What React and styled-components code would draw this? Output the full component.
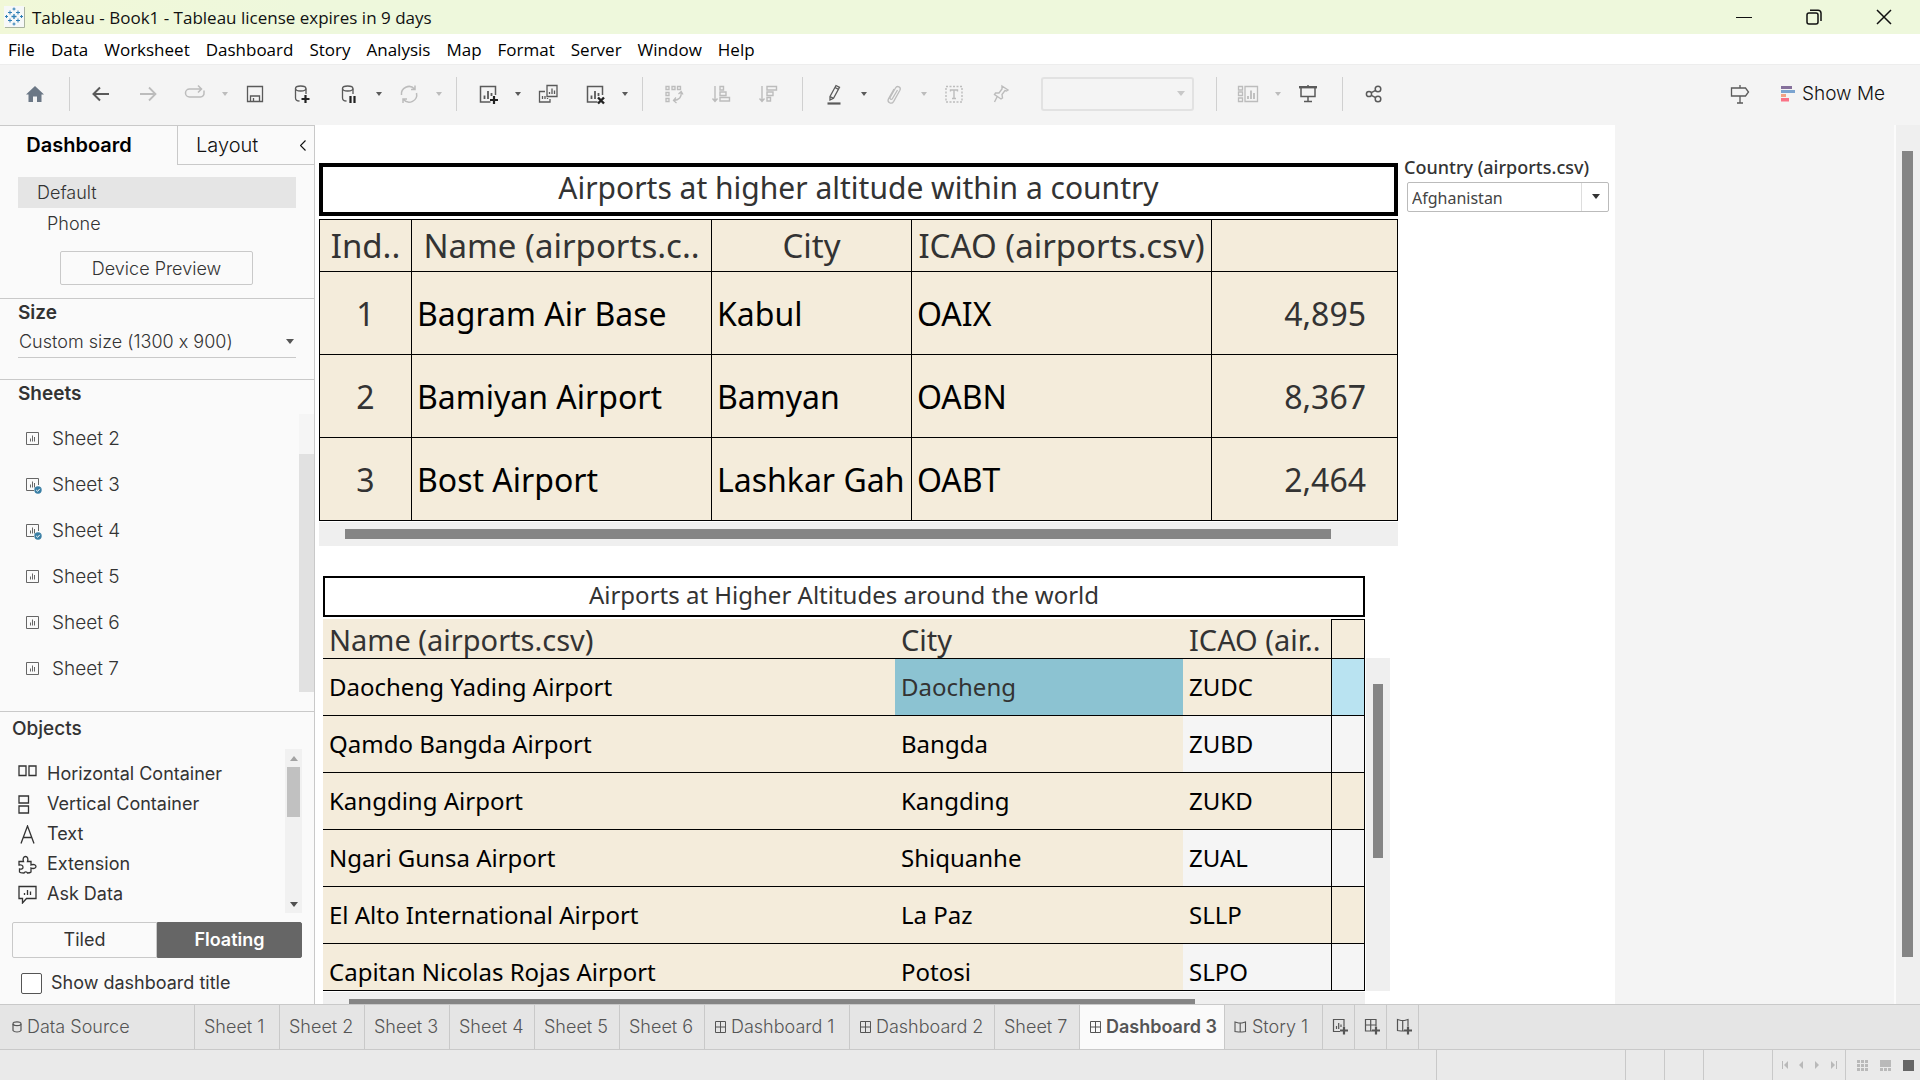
import React from 'react';
import styled, { createGlobalStyle, css } from 'styled-components';

const SYS = '"Open Sans", "Noto Sans", sans-serif';
const UI = 'Inter, "Liberation Sans", sans-serif';
const VIZ = '"Noto Sans", "Open Sans", sans-serif';
const LINE = '#c9c9c9';
const CREAM = '#f4ecdb';

const Global = createGlobalStyle`
  *, *::before, *::after { box-sizing: border-box; }
  html, body { margin: 0; height: 100%; }
  body { font-family: ${UI}; font-feature-settings: "calt" 0; color: #333; overflow: hidden; }
  button, select, input { font: inherit; font-feature-settings: inherit; color: inherit; margin: 0; }
  button { background: none; border: 0; padding: 0; }
`;

const Page = styled.div`
  display: flex;
  flex-direction: column;
  height: 100vh;
  background: #fff;
`;

/* ---------- window chrome ---------- */

const TitleBar = styled.header`
  display: flex;
  align-items: center;
  height: 34px;
  flex: none;
  padding: 0 6px 0 4px;
  background: linear-gradient(90deg, #f1f8d8, #eef8dc 300px);
  font: 17px/24px ${SYS};
  color: #111;
`;

const AppTitle = styled.h1`
  margin: 0 auto 0 7px;
  padding-top: 2px;
  font: inherit;
`;

const WindowButton = styled.button`
  display: grid;
  place-items: center;
  width: 70px;
  height: 34px;
  &:last-child { width: 60px; margin-left: 5px; }
`;

const MenuBar = styled.nav`
  display: flex;
  align-items: center;
  gap: 16px;
  height: 30px;
  flex: none;
  padding: 2px 0 0 8px;
  font: 17px/24px ${SYS};
  color: #000;
`;

const ToolBar = styled.div`
  display: flex;
  align-items: center;
  gap: 1px;
  height: 61px;
  flex: none;
  padding: 0 35px 2px 12px;
  background: #f4f4f4;
  border-top: 1px solid #ededed;
`;

const Tool = styled.button`
  display: grid;
  place-items: center;
  width: 46px;
  height: 40px;
  color: ${p => (p.$off ? '#bcbcbc' : '#5a5a5a')};
`;

const CaretTool = styled(Tool)`
  width: 12px;
`;

const Divider = styled.span`
  width: 1px;
  height: 34px;
  margin: 0 7px 0 10px;
  background: #d0d0d0;
`;

const FitBox = styled.div`
  position: relative;
  margin: 0 11px 0 16px;
  color: #c8c8c8;
  select {
    display: block;
    appearance: none;
    width: 153px;
    height: 34px;
    background: none;
    border: 2px solid #dadada;
    border-radius: 3px;
  }
  svg { position: absolute; right: 9px; top: 14px; pointer-events: none; }
`;

const ShowMe = styled.button`
  display: flex;
  align-items: center;
  gap: 7px;
  margin-left: 17px;
  font: 19px/26px ${UI};
  font-weight: 300;
  color: #111;
`;

const Spacer = styled.span`
  flex: 1;
`;

/* ---------- side bar ---------- */

const Workspace = styled.main`
  display: flex;
  flex: 1;
  min-height: 0;
`;

const SideBar = styled.aside`
  display: flex;
  flex-direction: column;
  width: 315px;
  flex: none;
  background: #fafafa;
  border: solid ${LINE};
  border-width: 1px 1px 0 0;
  font-size: 18px;
  line-height: 24px;
  font-weight: 300;
`;

const PaneTabs = styled.div`
  display: flex;
  height: 39px;
  flex: none;
`;

const PaneTab = styled.button`
  font-size: 20px;
  color: #111;
  ${p => p.$active
    ? css`width: 177px; padding: 0 19px 2px 0; font-weight: 600; color: #000;`
    : css`flex: 1; padding: 0 8px 0 18px; display: flex; align-items: center; justify-content: space-between;
        border: solid ${LINE}; border-width: 0 0 1px 1px;`}
`;

const Section = styled.section`
  flex: none;
  padding: ${p => p.$pad};
  border-bottom: 1px solid ${LINE};
`;

const Heading = styled.h2`
  margin: 0;
  font-size: 19px;
  line-height: 24px;
  font-weight: ${p => p.$weight || 600};
`;

const Device = styled.button`
  display: block;
  width: 278px;
  height: 31px;
  text-align: left;
  padding-left: ${p => (p.$active ? 19 : 29)}px;
  background: ${p => (p.$active ? '#e5e5e5' : 'none')};
`;

const Preview = styled.button`
  display: block;
  width: 193px;
  height: 34px;
  margin: 12px 0 0 42px;
  padding-top: 1px;
  border: 1px solid ${LINE};
  border-radius: 2px;
`;

const SizeBox = styled.div`
  position: relative;
  select {
    display: block;
    appearance: none;
    width: 278px;
    height: 33px;
    padding: 2px 0 0 1px;
    background: none;
    border: 0;
    border-bottom: 1px solid ${LINE};
    font-weight: 300;
  }
  svg { position: absolute; right: 2px; top: 14px; pointer-events: none; }
`;

const SheetsSection = styled.section`
  display: flex;
  flex-direction: column;
  flex: 1;
  min-height: 0;
  padding: 2px 0 19px 18px;
  border-bottom: 1px solid ${LINE};
`;

const ScrollArea = styled.div`
  display: flex;
  flex: 1;
  min-height: 0;
  margin-top: 8px;
  justify-content: space-between;
`;

const List = styled.ul`
  margin: 0;
  padding: ${p => p.$pad || 0};
  list-style: none;
  flex: 1;
`;

const SheetItem = styled.li`
  display: flex;
  align-items: center;
  gap: 10px;
  height: 46px;
  padding: 3px 0 0 8px;
  font-size: 19px;
`;

const SheetTrack = styled.div`
  width: 15px;
  padding-top: 40px;
  background: #f5f5f5;
  div { height: 100%; background: #e1e1e1; }
`;

const ObjectsSection = styled.section`
  flex: none;
  padding: 5px 12px 9px;
`;

const ObjectItem = styled.li`
  display: flex;
  align-items: center;
  gap: 10px;
  height: 30px;
  font-weight: 400;
  font-size: 18px;
`;

const ObjectTrack = styled.div`
  display: flex;
  flex-direction: column;
  align-items: center;
  justify-content: space-between;
  width: 17px;
  height: 164px;
  padding: 7px 0 6px;
  background: #f1f1f1;
  div { width: 13px; height: 50px; margin: 6px 0 auto; background: #c1c1c1; }
`;

const Segments = styled.div`
  display: flex;
  margin-top: 9px;
  height: 36px;
`;

const Segment = styled.button`
  flex: 1;
  font-size: 18px;
  font-weight: ${p => (p.$active ? 600 : 400)};
  color: ${p => (p.$active ? '#fff' : '#333')};
  background: ${p => (p.$active ? '#666' : '#fafafa')};
  border: 1px solid ${p => (p.$active ? '#666' : LINE)};
  border-radius: ${p => (p.$active ? '0 2px 2px 0' : '2px 0 0 2px')};
`;

const CheckLabel = styled.label`
  display: flex;
  align-items: center;
  gap: 9px;
  margin-top: 13px;
  padding-left: 9px;
  font-size: 18px;
  font-weight: 400;
  input {
    appearance: none;
    width: 21px;
    height: 21px;
    background: #fff;
    border: 1px solid #555;
    border-radius: 2px;
  }
`;

/* ---------- dashboard ---------- */

const Stage = styled.div`
  flex: 1;
  min-width: 0;
  overflow: hidden;
  background: #f4f4f4;
`;

const Canvas = styled.div`
  display: flex;
  align-items: flex-start;
  gap: 6px;
  width: 1300px;
  min-height: 900px;
  padding-left: 4px;
  background: #fff;
  font-family: ${VIZ};
`;

const Views = styled.div`
  display: flex;
  flex-direction: column;
  gap: 30px;
  padding-top: 38px;
`;

const View = styled.section`
  margin-left: ${p => p.$indent || 0}px;
`;

const ViewTitle = styled.h2`
  display: flex;
  align-items: center;
  justify-content: center;
  margin: 0;
  padding-bottom: 3px;
  height: ${p => (p.$large ? 53 : 41)}px;
  width: ${p => (p.$large ? 'auto' : '1042px')};
  border: ${p => (p.$large ? 4 : 2)}px solid #000;
  font-size: ${p => (p.$large ? 30 : 24)}px;
  line-height: 36px;
  font-weight: 400;
`;

const Grid = styled.table`
  table-layout: fixed;
  width: 1079px;
  margin-top: 3px;
  border-spacing: 0;
  border: solid #000;
  border-width: 1px 0 0 1px;
  background: ${CREAM};
  font-size: 32px;
  line-height: 40px;
  color: #000;
  th, td {
    padding: 1px 5px 0;
    border: solid #000;
    border-width: 0 1px 1px 0;
    text-align: left;
    white-space: nowrap;
    height: 83px;
  }
  th { height: 52px; font-weight: 400; font-size: 33px; text-align: center; color: #333; }
  td:first-child { text-align: center; color: #333; }
  td:last-child { text-align: right; padding-right: 31px; color: #333; }
`;

const HTrack = styled.div`
  height: 24px;
  margin-top: 1px;
  padding: 7px 26px;
  background: #efefef;
  width: ${p => p.$width}px;
  div { height: 10px; background: #858585; width: ${p => p.$thumb}px; }
`;

const WorldBody = styled.div`
  display: flex;
  align-items: flex-end;
  gap: 1px;
  margin-top: 2px;
`;

const Clip = styled.div`
  height: 372px;
  overflow: hidden;
  border-bottom: 1px solid #000;
`;

const WorldGrid = styled.table`
  table-layout: fixed;
  width: 1042px;
  border-spacing: 0;
  background: ${CREAM};
  font-size: 24px;
  line-height: 32px;
  color: #000;
  th, td {
    height: 57px;
    padding: 0 6px;
    border-bottom: 1px solid #000;
    text-align: left;
    white-space: nowrap;
  }
  th { height: 40px; padding-top: 2px; font-weight: 400; font-size: 29px; color: #333; }
  th:last-child { border-top: 1px solid #000; }
  th:last-child, td:last-child { border-left: 1px solid #000; border-right: 1px solid #000; }
  tr:nth-child(even) td:nth-child(n + 3) { background: #f5f5f5; }
`;

const WorldCell = styled.td`
  && { background: ${p => p.$bg}; color: #333; }
`;

const VTrack = styled.div`
  width: 24px;
  height: 333px;
  padding: 26px 7px;
  background: #efefef;
  div { height: 174px; background: #858585; }
`;

const Filter = styled.div`
  padding-top: 30px;
  label { display: block; font-size: 18px; line-height: 24px; font-weight: 500; }
`;

const FilterBox = styled.div`
  position: relative;
  margin: 3px 0 0 3px;
  select {
    display: block;
    appearance: none;
    width: 202px;
    height: 30px;
    padding: 2px 30px 0 4px;
    background: #fff linear-gradient(#ddd, #ddd) no-repeat right 26px top 0 / 1px 100%;
    border: 1px solid #bbb;
    border-radius: 2px;
    font-size: 16px;
    color: #444;
  }
  svg { position: absolute; right: 9px; top: 12px; pointer-events: none; }
`;

const PageTrack = styled.div`
  width: 26px;
  flex: none;
  padding: 26px 7px 47px 6px;
  background: #efefef;
  border-left: 2px solid #fbfbfb;
  div { height: 100%; background: #858585; }
`;

/* ---------- bottom ---------- */

const TabStrip = styled.nav`
  display: flex;
  height: 46px;
  flex: none;
  background: #e5e5e5;
  border: solid ${LINE};
  border-width: 1px 0;
  color: #555;
`;

const TAB_WIDTH = { source: 195, sheet: 85, board: 145, story: 98, add: 32 };

const Tab = styled.button`
  display: flex;
  align-items: center;
  gap: 5px;
  width: ${p => TAB_WIDTH[p.$kind]}px;
  padding: 0 0 0 ${p => (p.$kind === 'source' ? 12 : 9)}px;
  border-right: 1px solid ${LINE};
  font-size: 18px;
  line-height: 24px;
  white-space: nowrap;
  font-weight: ${p => (p.$active ? 600 : 300)};
  background: ${p => (p.$active ? '#fafafa' : 'none')};
  svg { flex: none; }
`;

const StatusBar = styled.footer`
  display: flex;
  justify-content: flex-end;
  height: 30px;
  flex: none;
  background: #eaeaea;
  color: #b9b9b9;
`;

const StatusCell = styled.div`
  display: flex;
  align-items: center;
  justify-content: center;
  gap: ${p => p.$gap || 0}px;
  width: ${p => p.$width}px;
  padding-left: ${p => p.$pad || 0}px;
  border-left: 1px solid ${LINE};
`;

/* ---------- icons ---------- */

const Icon = ({ size = 24, children, w, h, sw = 1.5, ...rest }) => (
  <svg width={w || size} height={h || size} viewBox={`0 0 ${w || size} ${h || size}`} fill="none"
    stroke="currentColor" strokeWidth={sw} aria-hidden="true" {...rest}>{children}</svg>
);

const Caret = ({ color = 'currentColor', up }) => (
  <svg width="8" height="5" viewBox="0 0 8 5" aria-hidden="true">
    <path d={up ? 'M0 5h8L4 0z' : 'M0 0h8L4 5z'} fill={color} />
  </svg>
);

const Logo = () => (
  <svg width="21" height="22" viewBox="0 0 21 22" aria-hidden="true">
    <path d="M0 0h20v21H0z" fill="#f6f8f8" />
    <path d="M20.500 1v20.500H1" stroke="#a9b3a0" fill="none" />
    <g stroke="#2f7fb5" strokeWidth="1">
      <path d="M7.500 10.500h5M10 8v5" strokeWidth="1.300" />
      <path d="M4 6.500h4M6 4.500v4M12 6.500h4M14 4.500v4M4 14.500h4M6 12.500v4M12 14.500h4M14 12.500v4" />
      <path d="M8.500 3h3M10 1.500v3M8.500 18h3M10 16.500v3M1 10.500h3M2.500 9v3M16 10.500h3M17.500 9v3" />
    </g>
  </svg>
);

const BarsSheet = ({ children }) => (
  <Icon>
    <path d="M14.500 20H4.500V4.500h15V13" />
    <path d="M8.500 17v-3.500M12 17V9M15.500 14v-3" strokeWidth="1.800" />
    {children}
  </Icon>
);

const icons = {
  home: <svg width="20" height="20" viewBox="0 0 20 20"><path d="M10 2l9 8.500h-2.500V18H12v-5.500H8V18H3.500v-7.500H1z" fill="#6b7785" /></svg>,
  back: <Icon sw={2}><path d="M20 12H5M11 5.500L4.500 12l6.500 6.500" /></Icon>,
  forward: <Icon sw={1.800}><path d="M4 12h15M13 5.500l6.500 6.500-6.500 6.500" /></Icon>,
  redo: <Icon><path d="M13 7H6.500a4 4 0 0 0 0 8h11a3.600 3.600 0 0 0 3.500-4V8.500M11 7h7M15 3.500L18.500 7 15 10.500" /></Icon>,
  save: <Icon sw={1.300}><path d="M4.500 4.500h15v15h-15zM7.500 19v-5h9v5M10.500 19v-3" /></Icon>,
  addData: <Icon sw={1.300}><path d="M5.500 6.500v9.500c0 2 2 3 4 3M16 6.500V12" /><ellipse cx="10.700" cy="6.500" rx="5.200" ry="2.500" /><path d="M15.500 13v8M11.500 17h8" stroke="#222" strokeWidth="2.200" /></Icon>,
  pauseData: <Icon sw={1.300}><path d="M5.500 6.500v9.500c0 2 2 3 4 3M16 6.500V12" /><ellipse cx="10.700" cy="6.500" rx="5.200" ry="2.500" /><path d="M13.500 14v7M17.500 14v7" stroke="#222" strokeWidth="2.200" /></Icon>,
  refresh: <Icon><path d="M4.500 13A7.500 7.500 0 0 1 17.500 7M19.500 11A7.500 7.500 0 0 1 6.500 17.500M18 3.500V7.500h-4M6 21v-4h4" /></Icon>,
  newSheet: <BarsSheet><path d="M18 14v8M14 18h8" stroke="#222" strokeWidth="2.200" /></BarsSheet>,
  duplicate: <Icon sw={1.300}><path d="M11 3.500h10v11H11zM9 9.500H3.500V20H14v-3" /><path d="M13.500 12v-2M16 12V6.500M18.500 12V8.500M6.500 17v-3M9 17v-3M11.500 17v-1" /></Icon>,
  clear: <BarsSheet><path d="M15 15.500l6 6M21 15.500l-6 6" stroke="#222" strokeWidth="2.400" /></BarsSheet>,
  swap: <Icon sw={1.300}><path d="M4 4.500h3v3H4zM10 4.500h3v3h-3zM15.500 4.500h3v3h-3zM4 10.500h3v3H4zM4 16.500h3v3H4zM19 10c1 5-2 8-7.500 8.500M16.500 12l2.700-2.500L21 12.500M14 15.500l-2.500 3 3 2.500" /></Icon>,
  sortUp: <Icon sw={1.400}><path d="M6 4v15M3.500 16.500L6 19.500l2.500-3M11 4.500h3.500V8H11zM11 10h6v3.500h-6zM11 15.500h9.500V19H11z" /></Icon>,
  sortDown: <Icon sw={1.400}><path d="M6 4v15M3.500 16.500L6 19.500l2.500-3M11 4.500h9.500V8H11zM11 10h6v3.500h-6zM11 15.500h3.500V19H11z" /></Icon>,
  pen: <Icon sw={1.300}><path d="M8 14.500l6-11 3.500 1.800-6 11L8 18zM8 14.500l3.500 1.800M13 5.500l3.500 1.800" /><path d="M5.500 21.500h13" strokeWidth="2.200" /></Icon>,
  clip: <Icon sw={1.300}><path d="M15.500 8l-5 8.500c-1 1.800-3.200.6-2.300-1.200L13.500 6c1.700-3 6-.8 4.400 2.300l-6.200 11c-2.200 3.700-7 1-5.200-2.500L12 7" /></Icon>,
  text: <Icon sw={1.400}><path d="M4 4.500h16v15.500H4z" strokeDasharray="2 1.500" /><path d="M8.500 9.500V8h7v1.500M12 8v8.500M10 16.500h4" /></Icon>,
  pin: <Icon sw={1.400}><path d="M13 4l6 4-1.500 1-1.500-.5-3 4 .5 3.500-1.500 1-6.500-4.500 1-1.500h3.500l3-4V5zM8 15l-2.500 5" /></Icon>,
  cards: <Icon sw={1.300}><path d="M2.500 4.500h4v3.500h-4zM2.500 10h4v3.500h-4zM2.500 16h4v3.500h-4zM9 4.500h12.500v15H9z" /><path d="M12 17v-3M15 17V8.500M18 17v-6" strokeWidth="1.800" /></Icon>,
  present: <Icon><path d="M3 5.200h18" strokeWidth="2.400" /><path d="M5 6v8.500h14V6M12 14.500V19M8 19.500h8M12 3v2" /></Icon>,
  share: <Icon><circle cx="7" cy="12" r="2.600" /><circle cx="16" cy="7" r="2.800" /><circle cx="16" cy="17" r="2.800" /><path d="M9.300 10.700l4.400-2.400M9.300 13.300l4.400 2.400" /></Icon>,
  guide: <Icon sw={1.300}><path d="M3.500 6h14l3 4-3 4h-14zM12 3v3M12 14v7M9 21h6" /></Icon>,
  showMe: <svg width="14" height="16" viewBox="0 0 14 16"><path d="M0 0h11v3H0z" fill="#85709b" /><path d="M0 4h14v3H0z" fill="#7ba4d0" /><path d="M0 8h5v3H0z" fill="#f2a385" /><path d="M0 12h8v3.500H0z" fill="#fb7286" /></svg>,
  horizontal: <Icon w={19} h={19} sw={1.300}><path d="M1 1h7v9.500H1zM11 1h7v9.500h-7z" /></Icon>,
  vertical: <Icon w={19} h={19} sw={1.300}><path d="M1 1h9.500v7H1zM1 11h9.500v7H1z" /></Icon>,
  letter: <Icon w={19} h={19} sw={1.300}><path d="M3 18.500L9.500 1 16 18.500M5.500 12.500h8" /></Icon>,
  extension: <Icon w={19} h={19} sw={1.300}><path d="M1 6.500h4.500c-1-2.500 0-5 2-5s3 2.500 2 5H13V10c2-1 5-.5 5 1.500s-3 2.500-5 1.500v4c-1 1-2 1-3.500 1-.5-1.500-3-1.500-3.500 0-2 0-4 0-4.500-1v-3c2 .5 3.500 0 3.500-1.800S3.500 9.500 1 10z" /></Icon>,
  ask: <Icon w={19} h={19} sw={1.300}><path d="M1 1.500h17v12H8.500L4.500 18v-4.500H1z" /><path d="M6.500 10V8M9.500 10V5M12.500 10V6.500" /></Icon>,
};

const SheetIcon = ({ used }) => (
  <svg width="16" height="18" viewBox="0 0 16 18" fill="none" aria-hidden="true">
    <path d={used ? 'M8 14.500H.5v-12h12V9' : 'M.5 2.500h12v12H.5z'} stroke="#666" />
    <path d="M4.500 11.500v-3M6.500 11.500v-6M8.500 11.500V7" stroke="#666" />
    {used && <><circle cx="12" cy="14" r="3.700" fill="#3a7fa5" /><path d="M10.200 14l1.400 1.300 2.200-2.500" stroke="#fff" /></>}
  </svg>
);

const TabIcon = ({ kind }) => {
  if (kind === 'source') return <Icon w={10} h={12} sw={1.200}><path d="M1 3v6.500c1 2 7 2 8 0V3" /><ellipse cx="5" cy="2.700" rx="4" ry="1.900" /></Icon>;
  if (kind === 'board') return <Icon w={12} h={12} sw={1}><path d="M1.500.5h10v11h-10zM6.500.5v11M1.500 6h10" /></Icon>;
  if (kind === 'story') return <Icon w={13} h={12} sw={1.100}><path d="M1 1l3.500 1H8l3.500-1v9.500L8 11H4.500L1 10.500zM6.200 2v9" /></Icon>;
  return null;
};

const AddIcon = ({ kind }) => (
  <Icon w={17} h={18} sw={1.200}>
    {kind === 'sheet' && <path d="M8 13.500H1.500v-12H12V8M4.500 11V8M6.700 11V5M9 9V6.500" />}
    {kind === 'board' && <path d="M8 13H1.500V1.500H12V8M6.700 1.500V13M1.500 7H12" />}
    {kind === 'story' && <path d="M8 13H5l-3.500-.5v-11L5 2.500h3.500l3.500-1V8M6.700 2.500V13" />}
    <path d="M12 8.500v8M8 12.500h8" strokeWidth="2.200" />
  </Icon>
);

/* ---------- data ---------- */

const MENUS = ['File', 'Data', 'Worksheet', 'Dashboard', 'Story', 'Analysis', 'Map', 'Format', 'Server', 'Window', 'Help'];

const TOOLS_LEFT = [
  ['home', 'Start page'], '|',
  ['back', 'Undo'], ['forward', 'Redo', 1], ['redo', 'Replay', 1, 1], ['save', 'Save'], ['addData', 'New data source'],
  ['pauseData', 'Pause updates', 0, 1], ['refresh', 'Run update', 1, 1], '|',
  ['newSheet', 'New worksheet', 0, 1], ['duplicate', 'Duplicate'], ['clear', 'Clear sheet', 0, 1], '|',
  ['swap', 'Swap', 1], ['sortUp', 'Sort ascending', 1], ['sortDown', 'Sort descending', 1], '|',
  ['pen', 'Highlight', 0, 1], ['clip', 'Group', 1, 1], ['text', 'Labels', 1], ['pin', 'Fix axes', 1], 'fit', '|',
  ['cards', 'Show cards', 1, 1], ['present', 'Presentation mode'], '|', ['share', 'Share'],
];

const SHEETS = [['Sheet 2'], ['Sheet 3', true], ['Sheet 4', true], ['Sheet 5'], ['Sheet 6'], ['Sheet 7']];

const OBJECTS = [
  ['horizontal', 'Horizontal Container'], ['vertical', 'Vertical Container'], ['letter', 'Text'],
  ['extension', 'Extension'], ['ask', 'Ask Data'],
];

const COUNTRY_ROWS = [
  ['1', 'Bagram Air Base', 'Kabul', 'OAIX', '4,895'],
  ['2', 'Bamiyan Airport', 'Bamyan', 'OABN', '8,367'],
  ['3', 'Bost Airport', 'Lashkar Gah', 'OABT', '2,464'],
];

const WORLD_ROWS = [
  ['Daocheng Yading Airport', 'Daocheng', 'ZUDC'],
  ['Qamdo Bangda Airport', 'Bangda', 'ZUBD'],
  ['Kangding Airport', 'Kangding', 'ZUKD'],
  ['Ngari Gunsa Airport', 'Shiquanhe', 'ZUAL'],
  ['El Alto International Airport', 'La Paz', 'SLLP'],
  ['Capitan Nicolas Rojas Airport', 'Potosi', 'SLPO'],
];

const TABS = [
  ['source', 'Data Source'], ['sheet', 'Sheet 1'], ['sheet', 'Sheet 2'], ['sheet', 'Sheet 3'], ['sheet', 'Sheet 4'],
  ['sheet', 'Sheet 5'], ['sheet', 'Sheet 6'], ['board', 'Dashboard 1'], ['board', 'Dashboard 2'], ['sheet', 'Sheet 7'],
  ['board', 'Dashboard 3', true], ['story', 'Story 1'],
];

/* ---------- parts ---------- */

const ToolEntry = ({ tool }) => {
  if (tool === '|') return <Divider />;
  if (tool === 'fit') {
    return <FitBox><select aria-label="Fit" disabled><option></option></select><Caret /></FitBox>;
  }
  const [name, label, off, caret] = tool;
  return (
    <>
      <Tool $off={off} aria-label={label}>{icons[name]}</Tool>
      {caret ? <CaretTool $off={off} aria-label={`${label} options`}>
        <svg width="6" height="4" viewBox="0 0 6 4"><path d="M0 0h6L3 4z" fill="currentColor" /></svg>
      </CaretTool> : null}
    </>
  );
};

function Side() {
  return (
    <SideBar>
      <PaneTabs>
        <PaneTab $active>Dashboard</PaneTab>
        <PaneTab>Layout
          <Icon w={6} h={11} sw={1.200}><path d="M5.500.5l-5 5 5 5" /></Icon>
        </PaneTab>
      </PaneTabs>
      <Section $pad="12px 18px 13px">
        <Device $active>Default</Device>
        <Device>Phone</Device>
        <Preview>Device Preview</Preview>
      </Section>
      <Section $pad="2px 18px 21px">
        <Heading as="label" htmlFor="size">Size</Heading>
        <SizeBox>
          <select id="size"><option>Custom size (1300 x 900)</option></select>
          <Caret color="#555" />
        </SizeBox>
      </Section>
      <SheetsSection>
        <Heading>Sheets</Heading>
        <ScrollArea>
          <List>
            {SHEETS.map(([name, used]) => <SheetItem key={name}><SheetIcon used={used} />{name}</SheetItem>)}
          </List>
          <SheetTrack><div /></SheetTrack>
        </ScrollArea>
      </SheetsSection>
      <ObjectsSection>
        <Heading $weight={500}>Objects</Heading>
        <ScrollArea>
          <List $pad="10px 0 0 6px">
            {OBJECTS.map(([icon, name]) => <ObjectItem key={name}>{icons[icon]}{name}</ObjectItem>)}
          </List>
          <ObjectTrack><Caret up color="#a3a3a3" /><div /><Caret color="#505050" /></ObjectTrack>
        </ScrollArea>
        <Segments>
          <Segment>Tiled</Segment>
          <Segment $active>Floating</Segment>
        </Segments>
        <CheckLabel><input type="checkbox" />Show dashboard title</CheckLabel>
      </ObjectsSection>
    </SideBar>
  );
}

function CountryView() {
  return (
    <View>
      <ViewTitle $large>Airports at higher altitude within a country</ViewTitle>
      <Grid>
        <colgroup>{[92, 300, 200, 300, 186].map((w, i) => <col key={i} width={w} />)}</colgroup>
        <thead>
          <tr><th>Ind..</th><th>Name (airports.c..</th><th>City</th><th>ICAO (airports.csv)</th><th></th></tr>
        </thead>
        <tbody>
          {COUNTRY_ROWS.map(row => <tr key={row[0]}>{row.map(c => <td key={c}>{c}</td>)}</tr>)}
        </tbody>
      </Grid>
      <HTrack $width={1079} $thumb={986}><div /></HTrack>
    </View>
  );
}

function WorldView() {
  return (
    <View $indent={4}>
      <ViewTitle>Airports at Higher Altitudes around the world</ViewTitle>
      <WorldBody>
        <Clip>
          <WorldGrid>
            <colgroup>{[572, 288, 148, 34].map((w, i) => <col key={i} width={w} />)}</colgroup>
            <thead><tr><th>Name (airports.csv)</th><th>City</th><th>ICAO (air..</th><th></th></tr></thead>
            <tbody>
              {WORLD_ROWS.map(([name, city, icao], i) => (
                <tr key={icao}>
                  <td>{name}</td>
                  {i === 0 ? <WorldCell $bg="#8cc3d2">{city}</WorldCell> : <td>{city}</td>}
                  <td>{icao}</td>
                  {i === 0 ? <WorldCell $bg="#b9e3f1" /> : <td></td>}
                </tr>
              ))}
            </tbody>
          </WorldGrid>
        </Clip>
        <VTrack><div /></VTrack>
      </WorldBody>
      <HTrack $width={1042} $thumb={846}><div /></HTrack>
    </View>
  );
}

export default function App() {
  return (
    <Page>
      <Global />
      <TitleBar>
        <Logo />
        <AppTitle>Tableau - Book1 - Tableau license expires in 9 days</AppTitle>
        <WindowButton aria-label="Minimize"><Icon w={16} h={16} stroke="#111" sw={1}><path d="M0 8.500h16" /></Icon></WindowButton>
        <WindowButton aria-label="Restore"><Icon w={16} h={16} stroke="#111"><rect x="1" y="4" width="11" height="11" rx="2" /><path d="M4 1.200h8A3 3 0 0 1 15 4v8" /></Icon></WindowButton>
        <WindowButton aria-label="Close"><Icon w={16} h={16} stroke="#111"><path d="M1 1l14 14M15 1L1 15" /></Icon></WindowButton>
      </TitleBar>
      <MenuBar>{MENUS.map(m => <button key={m}>{m}</button>)}</MenuBar>
      <ToolBar>
        {TOOLS_LEFT.map((t, i) => <ToolEntry key={i} tool={t} />)}
        <Spacer />
        <Tool aria-label="Data guide">{icons.guide}</Tool>
        <ShowMe>{icons.showMe}Show Me</ShowMe>
      </ToolBar>
      <Workspace>
        <Side />
        <Stage>
          <Canvas>
            <Views>
              <CountryView />
              <WorldView />
            </Views>
            <Filter>
              <label htmlFor="country">Country (airports.csv)</label>
              <FilterBox>
                <select id="country"><option>Afghanistan</option></select>
                <Caret color="#333" />
              </FilterBox>
            </Filter>
          </Canvas>
        </Stage>
        <PageTrack><div /></PageTrack>
      </Workspace>
      <TabStrip>
        {TABS.map(([kind, name, active]) => (
          <Tab key={name} $kind={kind} $active={active}><TabIcon kind={kind} />{name}</Tab>
        ))}
        {['sheet', 'board', 'story'].map(k => <Tab key={k} $kind="add" aria-label={`New ${k}`}><AddIcon kind={k} /></Tab>)}
      </TabStrip>
      <StatusBar>
        <StatusCell $width={189} />
        <StatusCell $width={39} />
        <StatusCell $width={39} />
        <StatusCell $width={69} />
        <StatusCell $width={73} $gap={11}>
          <svg width="6" height="8"><path d="M0 0h1v8H0zM6 0v8L2 4z" fill="currentColor" /></svg>
          <svg width="5" height="8"><path d="M4 0v8L0 4z" fill="currentColor" /></svg>
          <svg width="5" height="8"><path d="M0 0v8l4-4z" fill="currentColor" /></svg>
          <svg width="6" height="8"><path d="M5 0h1v8H5zM0 0v8l4-4z" fill="currentColor" /></svg>
        </StatusCell>
        <StatusCell $width={75} $pad={4} $gap={12}>
          <svg width="11" height="11"><path d="M0 0h3v3H0zM4 0h3v3H4zM8 0h3v3H8zM0 4h3v3H0zM4 4h3v3H4zM8 4h3v3H8zM0 8h3v3H0zM4 8h3v3H4zM8 8h3v3H8z" fill="currentColor" /></svg>
          <svg width="11" height="11"><path d="M0 0h11v7H0zM0 8h3v3H0zM4 8h3v3H4zM8 8h3v3H8z" fill="currentColor" /></svg>
          <svg width="11" height="11"><path d="M0 0h11v11H0z" fill="#666" /></svg>
        </StatusCell>
      </StatusBar>
    </Page>
  );
}
